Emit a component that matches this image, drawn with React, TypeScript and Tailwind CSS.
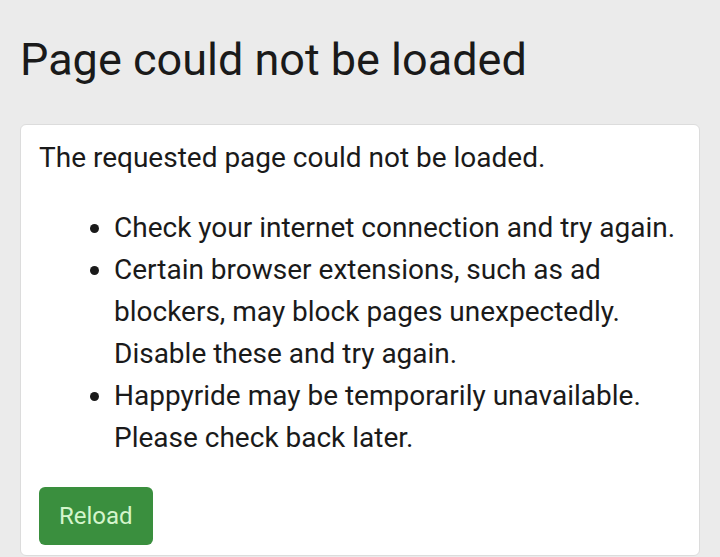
export default function App() {
  return (
    <div className="min-h-[557px] bg-[#ebebeb] px-5 pt-[32px] font-['Roboto',sans-serif] text-[#1a1a1a]">
      <h1 className="text-[45px] leading-[56px] font-normal">Page could not be loaded</h1>
      <div className="mt-[36px] rounded-[6px] border border-[#dcdcdc] bg-white px-[18px] pt-3 pb-[10px] text-[28px] leading-[42px]">
        <p className="mb-[28px]">The requested page could not be loaded.</p>
        <ul className="list-disc pl-[75px]">
          <li>Check your internet connection and try again.</li>
          <li>
            Certain browser extensions, such as ad blockers, may block pages unexpectedly. Disable
            these and try again.
          </li>
          <li>Happyride may be temporarily unavailable. Please check back later.</li>
        </ul>
        <button className="mt-[28px] h-[58px] rounded-[6px] bg-[#3a8f3e] px-5 text-[24px] text-[#d4f5cc]">
          Reload
        </button>
      </div>
    </div>
  );
}
